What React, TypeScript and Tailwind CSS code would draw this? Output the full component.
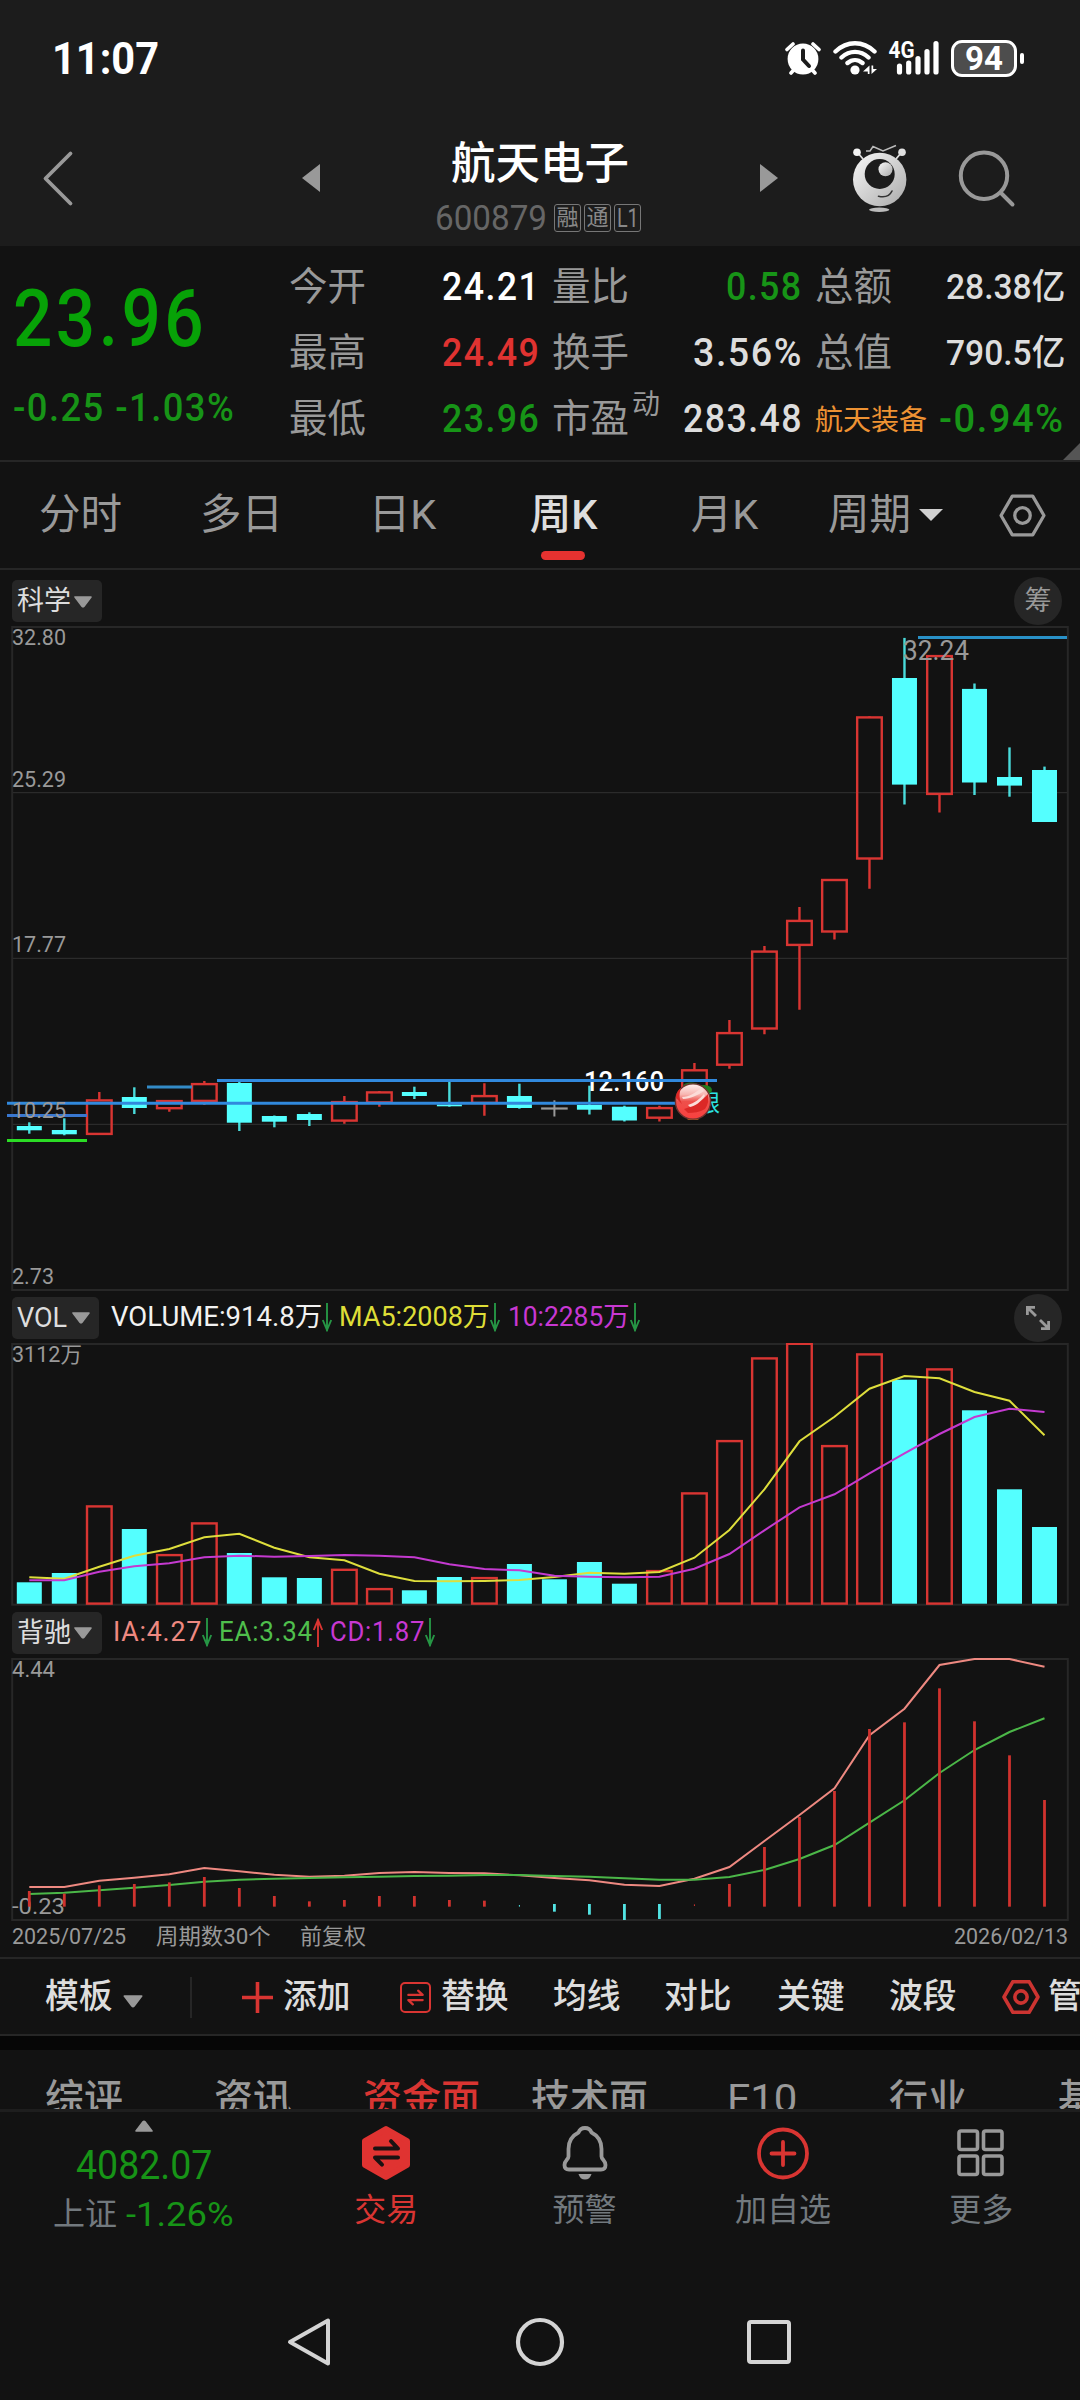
import { useLayoutEffect, useRef, type ReactNode } from "react";

/* Squeezes or stretches a line of text to the width of its box. */
function Fit({ className, children }: { className: string; children: ReactNode }) {
  const box = useRef<HTMLSpanElement>(null);
  const text = useRef<HTMLSpanElement>(null);
  useLayoutEffect(() => {
    if (box.current && text.current) {
      const k = box.current.clientWidth / text.current.offsetWidth;
      text.current.style.transform = `scaleX(${k})`;
    }
  });
  return (
    <span ref={box} className={"block shrink-0 leading-none " + className}>
      <span ref={text} className="inline-block origin-left whitespace-pre">
        {children}
      </span>
    </span>
  );
}

const CYAN = "#54ffff";
const RED = "#d93532";

type Candle = { k: "u" | "d" | "x"; t: number; b: number; h: number; l: number };
const c = (k: Candle["k"], t: number, b: number, h: number, l: number): Candle => ({ k, t, b, h, l });

const candles: Candle[] = [
  c("d", 1126, 1130.3, 1122.3, 1133.7),
  c("d", 1130, 1134.3, 1118.3, 1135.3),
  c("u", 1099.3, 1135, 1092, 1135),
  c("d", 1097, 1108, 1087.3, 1114),
  c("u", 1100, 1109.3, 1100, 1111.7),
  c("u", 1083, 1102, 1081, 1105),
  c("d", 1083, 1122.7, 1082, 1131),
  c("d", 1116, 1121.7, 1115.5, 1127.3),
  c("d", 1114, 1120, 1112.3, 1126),
  c("u", 1101, 1121.7, 1096, 1123.7),
  c("u", 1091.3, 1103.5, 1091, 1106.7),
  c("d", 1092, 1096, 1086.7, 1099),
  c("d", 1104.5, 1106.3, 1081.3, 1106.7),
  c("u", 1095, 1104, 1083.3, 1115.7),
  c("d", 1096, 1108, 1083.7, 1108.7),
  c("x", 1107.4, 1109.6, 1100.3, 1116.5),
  c("d", 1105, 1109.7, 1085.7, 1114.5),
  c("d", 1106.7, 1120.5, 1105.7, 1121.5),
  c("u", 1107, 1118.8, 1105.7, 1121.6),
  c("u", 1069.2, 1104, 1063, 1104),
  c("u", 1032, 1065.8, 1020, 1068.8),
  c("u", 950.5, 1029.6, 946, 1034.3),
  c("u", 919.8, 946, 907, 1009.7),
  c("u", 878.9, 932.6, 878.9, 939.4),
  c("u", 716.3, 859.6, 716.3, 888.7),
  c("d", 678, 784.6, 637.9, 804.5),
  c("u", 655, 795, 655, 812.6),
  c("d", 688.9, 782.5, 683.5, 795),
  c("d", 777, 785.6, 747.4, 796.7),
  c("d", 770, 822, 766.6, 822),
];

const volumeTops = [
  1582.3, 1573, 1505.3, 1529, 1554, 1522.3, 1553, 1577.3, 1578, 1568.7, 1588, 1590.3, 1577, 1577, 1564, 1579.3, 1562,
  1583.7, 1570, 1492.3, 1440, 1357.3, 1342.7, 1445, 1353.3, 1379.7, 1368.3, 1410.3, 1489.3, 1527,
];

const ma5 = [
  862, 866, 830, 797, 777, 742, 731, 773, 802, 811, 851, 873, 874, 873, 870, 861, 848, 851, 846, 803, 720, 598, 454, 380,
  296, 258, 265, 306, 332, 436,
];
const ma10 = [
  871, 871, 845, 829, 820, 802, 797, 800, 798, 795, 797, 802, 823, 837, 841, 857, 860, 862, 860, 836, 792, 721, 652, 613,
  550, 490, 432, 381, 356, 366,
];
const ia = [
  831, 831, 812, 803, 793, 774, 784, 794, 800, 797, 789, 786, 789, 790, 796, 804, 811, 824, 828, 806, 771, 693, 615, 535,
  376, 296, 165, 147, 147, 170,
];
const ea = [
  852, 848, 841, 833, 825, 815, 809, 806, 804, 802, 800, 798, 797, 795, 795, 798, 800, 805, 809, 809, 801, 780, 747, 705,
  638, 571, 489, 420, 366, 325,
];
const cd: [number, number][] = [
  [843, 890], [851, 890], [826, 890], [822, 890], [817, 890], [801, 890], [834, 890], [858, 890], [874, 890], [870, 890],
  [858, 890], [858, 890], [870, 890], [872, 890], [885, 890], [882, 905], [882, 914], [882, 930], [882, 927], [883, 888],
  [822, 890], [711, 890], [621, 890], [543, 890], [357, 890], [337, 890], [235, 890], [334, 890], [436, 890], [570, 890],
];

const cx = (i: number) => 29.3 + 35.007 * i;
const line = (v: number[], base: number) => v.map((y, i) => `${cx(i).toFixed(1)},${(base + y / 3).toFixed(1)}`).join(" ");

function Label({ x, y, w, size = 22, fill = "#999999", weight = 400, children }: {
  x: number; y: number; w: number; size?: number; fill?: string; weight?: number; children: string;
}) {
  return (
    <text x={x} y={y + size * 0.355} fontSize={size} fontWeight={weight} fill={fill} textLength={w} lengthAdjust="spacingAndGlyphs">
      {children}
    </text>
  );
}

function Frame({ top, bottom }: { top: number; bottom: number }) {
  return <rect x={12.2} y={top} width={1055.6} height={bottom - top} fill="none" stroke="#272727" strokeWidth={2} />;
}

function MainChart() {
  return (
    <svg className="block h-[665px] w-[1080px]" viewBox="0 626 1080 665">
      <Frame top={627} bottom={1290} />
      {[792.6, 958.4, 1124.3].map((y) => (
        <line key={y} x1={13} x2={1067} y1={y} y2={y} stroke="#2b2b2b" strokeWidth={1.3} />
      ))}
      {candles.map((k, i) => {
        const x = cx(i);
        if (k.k === "x")
          return (
            <g key={i} fill="#999999">
              <rect x={x - 13.3} y={k.t} width={26.6} height={2.2} />
              <rect x={x - 1} y={k.h} width={2} height={k.l - k.h} />
            </g>
          );
        if (k.k === "d")
          return (
            <g key={i} fill={CYAN}>
              <rect x={x - 1.2} y={k.h} width={2.4} height={k.l - k.h} opacity={0.85} />
              <rect x={x - 12.5} y={k.t} width={25} height={k.b - k.t} />
            </g>
          );
        return (
          <g key={i} stroke={RED} strokeWidth={2.4} fill="none">
            <path d={`M${x} ${k.h}V${k.t + 1}M${x} ${k.b - 1}V${k.l}`} />
            <rect x={x - 12.3} y={k.t + 1.1} width={24.6} height={k.b - k.t - 2.2} />
          </g>
        );
      })}
      <Label x={584} y={1081} w={80} size={27} weight={500} fill="#ffffff">12.160</Label>
      <g strokeWidth={3} fill="none">
        <path d="M7 1103.3H676M217 1080.4H717" stroke="#3189dd" />
        <path d="M7 1115.4H87" stroke="#3977cf" />
        <path d="M147 1087H192" stroke="#338bc7" />
        <path d="M918 637.5H1067" stroke="#2991c7" />
        <path d="M7 1140.4H87" stroke="#2bdc25" />
      </g>
      <text x={697} y={1111} fontSize={23} fill="#2ce4e4">银</text>
      <ellipse cx={704} cy={1090} rx={8} ry={5} fill="#1f7d1d" />
      <ellipse cx={691} cy={1085.5} rx={8} ry={3} fill="#2b6e22" />
      <rect x={687} y={1115} width={12} height={5} rx={2} fill="#c6661e" />
      <defs>
        <linearGradient id="ball" x1="0" y1="0" x2="0" y2="1">
          <stop offset="0" stopColor="#fff4f2" />
          <stop offset="0.3" stopColor="#f7b5b0" />
          <stop offset="0.5" stopColor="#ee504b" />
          <stop offset="1" stopColor="#f93f3e" />
        </linearGradient>
      </defs>
      <circle cx={693} cy={1101.5} r={17.6} fill="url(#ball)" stroke="#703230" strokeWidth={1.4} />
      <path d="M676 1098C676 1093 678 1090 681 1088C679 1094 679 1099 682 1104ZM684 1109C694 1106 702 1101 708 1094C709 1100 708 1105 705 1109C700 1112 693 1113 688 1113Z" fill="#dc2826" />
      <path d="M682 1097C689 1097 697 1092 701 1088L704 1091C698 1095 690 1099 683 1099ZM688 1105C694 1103 700 1099 704 1094L705 1096C701 1102 695 1106 690 1107Z" fill="#fbdcd8" />
      <Label x={12} y={637} w={54}>32.80</Label>
      <Label x={12} y={779} w={54}>25.29</Label>
      <Label x={12} y={944.5} w={54}>17.77</Label>
      <Label x={12} y={1110.5} w={54}>10.25</Label>
      <Label x={12} y={1276} w={42}>2.73</Label>
      <Label x={903} y={650.5} w={66} size={27}>32.24</Label>
    </svg>
  );
}

function VolumeChart() {
  return (
    <svg className="block h-[263px] w-[1080px]" viewBox="0 1343 1080 263">
      <Frame top={1344} bottom={1604.7} />
      {volumeTops.map((t, i) =>
        candles[i].k === "u" ? (
          <rect key={i} x={cx(i) - 12.3} y={t + 1.1} width={24.6} height={1603.6 - t - 1.1} fill="none" stroke={RED} strokeWidth={2.4} />
        ) : (
          <rect key={i} x={cx(i) - 12.5} y={t} width={25} height={1603.7 - t} fill={CYAN} />
        ),
      )}
      <polyline points={line(ma5, 1290)} fill="none" stroke="#dede3c" strokeWidth={2} />
      <polyline points={line(ma10, 1290)} fill="none" stroke="#c43ad0" strokeWidth={2} />
      <Label x={12} y={1354} w={70}>3112万</Label>
    </svg>
  );
}

function DivergenceChart() {
  return (
    <svg className="block h-[263px] w-[1080px]" viewBox="0 1658 1080 263">
      <Frame top={1659} bottom={1920} />
      <Label x={12} y={1669} w={43}>4.44</Label>
      <Label x={12} y={1906.5} w={53}>-0.23</Label>
      <polyline points={line(ia, 1610)} fill="none" stroke="#ee8981" strokeWidth={2} />
      <polyline points={line(ea, 1610)} fill="none" stroke="#4bb748" strokeWidth={2} />
      {cd.map(([t, b], i) => {
        const neg = i >= 14 && i <= 18;
        const w = i === 14 || i === 19 ? 1 : 2.8;
        return <rect key={i} x={cx(i) - w / 2} y={1610 + t / 3} width={w} height={(b - t) / 3} fill={neg ? "#52e4e4" : "#cf322e"} />;
      })}
    </svg>
  );
}

function Caret({ className }: { className: string }) {
  return (
    <svg className={"shrink-0 " + className} viewBox="0 0 20 12">
      <path d="M2 1H18L11 10.2Q10 11.4 9 10.2Z" fill="currentColor" stroke="currentColor" strokeWidth={1.6} strokeLinejoin="round" />
    </svg>
  );
}

function Arrow({ up }: { up?: boolean }) {
  return (
    <svg className="h-[29px] w-[10px] shrink-0" viewBox="0 0 10 29" fill="none" stroke={up ? "#d93532" : "#269645"} strokeWidth={1.9}>
      {up ? <path d="M5 29V1M.8 12L5 2L9.2 12" /> : <path d="M5 0V28M.8 17L5 27L9.2 17" />}
    </svg>
  );
}

function Hexagon({ className, sw }: { className: string; sw: number }) {
  return (
    <svg className={"shrink-0 " + className} viewBox="0 0 46 42" fill="none" stroke="currentColor" strokeWidth={sw} strokeLinejoin="round">
      <path d="M13 2H33L44 21L33 40H13L2 21Z" />
      <circle cx={23} cy={21} r={7.6} />
    </svg>
  );
}

function Swap({ className }: { className: string }) {
  return (
    <svg className={className} viewBox="0 0 26 26" fill="none" stroke="currentColor" strokeWidth={3.4} strokeLinecap="round" strokeLinejoin="round">
      <path d="M2 9H24L17 2.5M24 17H2L9 23.5" />
    </svg>
  );
}

function StatusBar() {
  return (
    <div className="flex h-[116px] items-center pl-[52px] text-white">
      <Fit className="w-[107px] text-[45px] font-bold">11:07</Fit>
      <svg className="ml-[626px] h-[34px] w-[36px]" viewBox="785 40.5 36 34">
        <circle cx={803} cy={58.5} r={15.4} fill="#fff" />
        <path d="M787 49L793 43.5M819 49L813 43.5M791 72.5L795 68M815 72.5L811 68" stroke="#fff" strokeWidth={3.6} strokeLinecap="round" />
        <path d="M803 50V59L809 65.5" fill="none" stroke="#1c1c1c" strokeWidth={4} strokeLinecap="round" />
      </svg>
      <svg className="ml-[12px] h-[34px] w-[44px]" viewBox="833 40 44 34">
        <g fill="none" stroke="#fff" strokeWidth={4.4} strokeLinecap="round">
          <path d="M835.5 50.5C847 39.5 863 39.5 874.5 50.5M841.5 56.5C849.5 49 860.5 49 868.5 56.5M847.5 62C852 58.2 858 58.2 862.5 62" />
        </g>
        <circle cx={855} cy={69} r={4.6} fill="#fff" />
        <path d="M869.500 64.500V73H867.800V70.500H863ZM871.500 73V64.500H873.200V68H877Z" fill="#fff" />
      </svg>
      <svg className="ml-[11px] h-[34px] w-[51px] overflow-visible" viewBox="888 40 51 34">
        <text x={888.5} y={56.5} fontSize={23} fontWeight={700} fill="#fff" textLength={26} lengthAdjust="spacingAndGlyphs">4G</text>
        <path d="M899.5 65V71M908.7 62V71M918 57.5V71M927 50.5V71M936 42.5V71" stroke="#fff" strokeWidth={5.2} strokeLinecap="round" />
      </svg>
      <div className="ml-[12px] flex h-[37px] w-[66px] items-center justify-center rounded-[11px] border-[3px] border-white bg-[#4d4d4d]">
        <Fit className="w-[38px] text-[33px] font-bold">94</Fit>
      </div>
      <div className="ml-[3px] h-[11px] w-[4px] rounded-full bg-white" />
    </div>
  );
}

function TitleBar() {
  return (
    <div className="flex h-[130px] pt-[24px] text-[#999999]">
      <svg className="ml-[42px] mt-[9px] h-[60px] w-[32px]" viewBox="0 0 32 60" fill="none" stroke="#999" strokeWidth={3.8} strokeLinecap="round" strokeLinejoin="round">
        <path d="M28.5 4.5L3.5 29.5L28.5 54.5" />
      </svg>
      <svg className="ml-[228px] mt-[24px] h-[28px] w-[18px]" viewBox="0 0 18 28"><path d="M18 0V28L0 14Z" fill="#999" /></svg>
      <div className="ml-[114px] flex w-[208px] flex-col items-center">
        <div className="ml-[4px] h-[46px] whitespace-nowrap text-[44.5px] font-medium leading-[48px] text-white">航天电子</div>
        <div className="mt-[16px] flex h-[32px] items-center gap-[3px]">
          <Fit className="mr-[4px] w-[112px] text-[35px] text-[#666666]">600879</Fit>
          <div className="flex h-[28px] w-[27px] items-center justify-center rounded-[3px] border border-[#777777] text-[22px] leading-none text-[#888888]">融</div>
          <div className="flex h-[28px] w-[27px] items-center justify-center rounded-[3px] border border-[#777777] text-[22px] leading-none text-[#888888]">通</div>
          <div className="flex h-[28px] w-[27px] items-center justify-center rounded-[3px] border border-[#777777] text-[#888888]">
            <Fit className="w-[22px] text-[26px]">L1</Fit>
          </div>
        </div>
      </div>
      <svg className="ml-[118px] mt-[24px] h-[28px] w-[18px]" viewBox="0 0 18 28"><path d="M0 0V28L18 14Z" fill="#999" /></svg>
      <svg className="ml-[72px] mt-[3px] h-[70px] w-[60px]" viewBox="850 143 60 70">
        <defs>
          <linearGradient id="bot" x1="0" y1="0" x2="1" y2="1">
            <stop offset="0" stopColor="#f8f8f8" />
            <stop offset="1" stopColor="#aaaaaa" />
          </linearGradient>
        </defs>
        <path d="M866 151H870L873 146.5L883 151L896 145.5" fill="none" stroke="#bbb" strokeWidth={1.5} />
        <path d="M858 153L863 159M901 153L896 159" stroke="#ddd" strokeWidth={1.8} />
        <circle cx={857} cy={152.3} r={3.8} fill="#f4f4f4" />
        <circle cx={902} cy={152.3} r={3.8} fill="#e0e0e0" />
        <circle cx={879.7} cy={179.5} r={26.7} fill="url(#bot)" />
        <circle cx={879.7} cy={174} r={15} fill="#1c1c1c" />
        <circle cx={885.5} cy={169.3} r={7} fill="url(#bot)" />
        <path d="M878.5 196.2Q888.5 198.5 892 191" fill="none" stroke="#333" strokeWidth={1.6} strokeLinecap="round" />
        <ellipse cx={879.2} cy={209.8} rx={10.2} ry={2.2} fill="#bbb" />
      </svg>
      <svg className="ml-[48px] mt-[8px] h-[60px] w-[60px]" viewBox="958 148 60 60" fill="none" stroke="#999" strokeWidth={4} strokeLinecap="round">
        <circle cx={984} cy={175.7} r={23.2} />
        <path d="M1001.5 193.5L1012.5 204.5" />
      </svg>
    </div>
  );
}

const label = "whitespace-nowrap text-[38.5px] leading-none text-[#999999]";
const quoteRow = "flex h-[66px] items-center justify-between";
const value = "text-[39px] font-medium tracking-[0.04em]";

function Quote() {
  return (
    <div className="relative flex h-[216px] border-b-2 border-[#262626] pt-[8px]">
      <div className="w-[289px] shrink-0 pl-[13px] text-[#07a207]">
        <Fit className="mt-[25px] w-[194px] text-[80px] font-medium tracking-[0.05em]">23.96</Fit>
        <Fit className="mt-[30px] w-[222px] text-[38px] tracking-[0.04em] text-[#179417] font-medium">-0.25 -1.03%</Fit>
      </div>
      <div className="w-[251px] shrink-0">
        <div className={quoteRow}><span className={label}>今开</span><Fit className={value + " w-[98px] text-white"}>24.21</Fit></div>
        <div className={quoteRow}><span className={label}>最高</span><Fit className={value + " w-[98px] text-[#e03331]"}>24.49</Fit></div>
        <div className={quoteRow}><span className={label}>最低</span><Fit className={value + " w-[98px] text-[#179417]"}>23.96</Fit></div>
      </div>
      <div className="ml-[12px] w-[251px] shrink-0">
        <div className={quoteRow}><span className={label}>量比</span><Fit className={value + " w-[77px] text-[#179417]"}>0.58</Fit></div>
        <div className={quoteRow}><span className={label}>换手</span><Fit className={value + " w-[110px] text-[#dddddd]"}>3.56%</Fit></div>
        <div className={quoteRow}>
          <span className={label}>市盈</span>
          <span className="mb-[29px] ml-[3px] mr-auto text-[28px] leading-none text-[#999999]">动</span>
          <Fit className={value + " w-[120px] text-[#dddddd]"}>283.48</Fit>
        </div>
      </div>
      <div className="ml-[12px] w-[250px] shrink-0">
        <div className={quoteRow}><span className={label}>总额</span><Fit className="w-[119px] text-[35px] font-medium text-[#dddddd]">28.38亿</Fit></div>
        <div className={quoteRow}><span className={label}>总值</span><Fit className="w-[119px] text-[35px] font-medium text-[#dddddd]">790.5亿</Fit></div>
        <div className={quoteRow}>
          <span className="mt-[3px] whitespace-nowrap text-[28px] leading-none text-[#ee9233]">航天装备</span>
          <Fit className={value + " w-[126px] text-[#179417]"}>-0.94%</Fit>
        </div>
      </div>
      <svg className="absolute bottom-0 right-0 h-[17px] w-[17px]" viewBox="0 0 17 17"><path d="M17 0V17H0Z" fill="#555" /></svg>
    </div>
  );
}

function PeriodTabs() {
  const tab = "relative flex w-[161px] shrink-0 items-center justify-center whitespace-nowrap";
  return (
    <div className="flex h-[108px] border-b-2 border-[#262626] text-[41.5px] leading-none text-[#999999]">
      <div className={tab}>分时</div>
      <div className={tab}>多日</div>
      <div className={tab}>日K</div>
      <div className={tab + " font-medium text-[#dddddd]"}>
        周K
        <span className="absolute bottom-[8px] left-[58px] h-[9px] w-[44px] rounded-full bg-[#e63230]" />
      </div>
      <div className={tab}>月K</div>
      <div className={tab}>
        周期
        <svg className="ml-[8px] h-[12px] w-[24px]" viewBox="0 0 24 12"><path d="M0 0H24L12 12Z" fill="#d0d0d0" /></svg>
      </div>
      <div className="flex w-[113px] items-center justify-center">
        <Hexagon className="h-[43px] w-[47px]" sw={3.2} />
      </div>
    </div>
  );
}

const pill = "ml-[12px] flex h-[42px] shrink-0 items-center rounded-[5px] bg-[#262626] pl-[5px] pt-[1px] text-[27px] leading-none text-[#dddddd]";
const round = "ml-auto mr-[18px] flex h-[48px] w-[48px] shrink-0 items-center justify-center rounded-full bg-[#262626] text-[27px] leading-none text-[#999999]";

function Charts() {
  return (
    <>
      <div className="flex h-[56px] items-center pt-[6px]">
        <div className={pill + " w-[90px]"}>科学<Caret className="ml-[2px] h-[12px] w-[20px] text-[#999999]" /></div>
        <div className={round}>筹</div>
      </div>
      <MainChart />
      <div className="flex h-[52px] items-center pt-[1px]">
        <div className={pill + " w-[87px]"}>
          <Fit className="w-[50px] text-[27px]">VOL</Fit>
          <Caret className="ml-[4px] h-[12px] w-[20px] text-[#999999]" />
        </div>
        <Fit className="ml-[12px] w-[211px] text-[27px] text-[#f2f2f2]">VOLUME:914.8万</Fit>
        <Arrow />
        <Fit className="ml-[7px] w-[151px] text-[27px] text-[#dede37]">MA5:2008万</Fit>
        <Arrow />
        <Fit className="ml-[8px] w-[122px] text-[27px] text-[#c838d2]">10:2285万</Fit>
        <Arrow />
        <div className={round}>
          <svg className="h-[26px] w-[26px]" viewBox="0 0 26 26" fill="none" stroke="#999" strokeWidth={2.8}>
            <path d="M10 2.4H2.4V10M2.4 2.4L11 11M16 23.6H23.6V16M23.6 23.6L15 15" />
          </svg>
        </div>
      </div>
      <VolumeChart />
      <div className="flex h-[52px] items-center pt-[1px]">
        <div className={pill + " w-[90px]"}>背驰<Caret className="ml-[2px] h-[12px] w-[20px] text-[#999999]" /></div>
        <Fit className="ml-[11px] w-[89px] text-[27px] tracking-[0.03em] text-[#ee8981]">IA:4.27</Fit>
        <Arrow />
        <Fit className="ml-[7px] w-[94px] text-[27px] tracking-[0.03em] text-[#4fbf4c]">EA:3.34</Fit>
        <Arrow up />
        <Fit className="ml-[7px] w-[95px] text-[27px] tracking-[0.03em] text-[#c838d2]">CD:1.87</Fit>
        <Arrow />
      </div>
      <DivergenceChart />
      <div className="flex h-[36px] items-center pb-[5px] pl-[12px] pr-[12px] text-[22px] leading-none text-[#999999]">
        <Fit className="w-[114px]">2025/07/25</Fit>
        <Fit className="ml-[30px] w-[115px]">周期数30个</Fit>
        <span className="ml-[29px]">前复权</span>
        <Fit className="ml-auto w-[114px]">2026/02/13</Fit>
      </div>
    </>
  );
}

function Toolbar() {
  return (
    <div className="flex h-[79px] items-center overflow-hidden whitespace-nowrap border-y-2 border-[#262626] pl-[45px] pt-[1px] text-[33.8px] font-medium leading-none text-[#dddddd]">
      <span className="w-[69px] shrink-0">模板</span>
      <Caret className="ml-[8px] mt-[9px] h-[13px] w-[22px] text-[#999999]" />
      <div className="ml-[46px] h-[41px] w-[2px] shrink-0 bg-[#262626]" />
      <svg className="ml-[50px] h-[31px] w-[31px] shrink-0" viewBox="0 0 31 31"><path d="M15.5 0V31M0 15.5H31" stroke={RED} strokeWidth={3.6} /></svg>
      <span className="ml-[10px] w-[68px] shrink-0">添加</span>
      <div className="ml-[49px] flex h-[31px] w-[31px] shrink-0 items-center justify-center rounded-[5px] border-[2.5px] border-[#d93532] text-[#d93532]">
        <Swap className="h-[17px] w-[19px]" />
      </div>
      <span className="ml-[10px] w-[68px] shrink-0">替换</span>
      <span className="ml-[44px] w-[68px] shrink-0">均线</span>
      <span className="ml-[43px] w-[68px] shrink-0">对比</span>
      <span className="ml-[45px] w-[68px] shrink-0">关键</span>
      <span className="ml-[44px] w-[68px] shrink-0">波段</span>
      <Hexagon className="ml-[45px] h-[34px] w-[38px] text-[#cc3431]" sw={4.4} />
      <span className="ml-[8px] shrink-0">管理</span>
    </div>
  );
}

function InfoTabs() {
  return (
    <div className="flex h-[59px] items-start overflow-hidden whitespace-nowrap pt-[30px] text-[39px] font-medium leading-none text-[#999999]">
      <span className="ml-[45px] w-[169px] shrink-0">综评</span>
      <span className="w-[149px] shrink-0">资讯</span>
      <span className="w-[168px] shrink-0 text-[#d93532]">资金面</span>
      <span className="w-[196px] shrink-0">技术面</span>
      <Fit className="w-[70px] font-normal">F10</Fit>
      <span className="ml-[92px] w-[169px] shrink-0">行业</span>
      <span className="shrink-0">基本面</span>
    </div>
  );
}

function BottomBar() {
  const item = "flex w-[198.4px] shrink-0 flex-col items-center pt-[12px] text-[32px] leading-none text-[#72797e]";
  return (
    <div className="flex h-[156px] border-t-[3px] border-[#1e1e1e]">
      <div className="flex w-[287px] shrink-0 flex-col items-center pt-[8px]">
        <Caret className="h-[12px] w-[20px] rotate-180 text-[#999999]" />
        <Fit className="mt-[14px] w-[136px] text-[40px] text-[#179417]">4082.07</Fit>
        <div className="mt-[11px] flex items-center text-[32px] leading-none text-[#72797e]">
          上证
          <Fit className="ml-[9px] w-[108px] text-[34px] text-[#179417]">-1.26%</Fit>
        </div>
      </div>
      <div className={item}>
        <svg className="h-[58px] w-[52px]" viewBox="0 0 52 58">
          <path d="M26 5L47 17V41L26 53L5 41V17Z" fill="#e03331" stroke="#e03331" strokeWidth={6} strokeLinejoin="round" />
          <path d="M15 24.6H38L31 17.2M38 33.6H15L22 40.6" fill="none" stroke="#1a1212" strokeWidth={4} strokeLinecap="round" strokeLinejoin="round" />
        </svg>
        <span className="mt-[12px] text-[#d93532]">交易</span>
      </div>
      <div className={item}>
        <svg className="h-[58px] w-[52px]" viewBox="0 0 52 58">
          <path d="M19.5 8.5C21 4.5 24 4 26 4S31 4.500 32.500 8.500C39.500 12 42.500 18 42.500 25V32.500C42.500 35.500 46.500 36.500 46.500 41C46.500 44.500 44.500 45.500 42 45.500H10C7.500 45.500 5.500 44.500 5.500 41C5.500 36.500 9.500 35.500 9.500 32.500V25C9.500 18 12.500 12 19.500 8.500Z" fill="none" stroke="#999" strokeWidth={3.8} strokeLinejoin="round" />
          <path d="M19.500 50H32.500Q31 55.500 26 55.500Q21 55.500 19.500 50Z" fill="#999" />
        </svg>
        <span className="mt-[12px]">预警</span>
      </div>
      <div className={item}>
        <svg className="h-[58px] w-[52px]" viewBox="0 0 52 58" fill="none" stroke="#d93532" strokeLinecap="round">
          <circle cx={26} cy={29.5} r={24} strokeWidth={3.8} />
          <path d="M26 18V41M14.500 29.500H37.500" strokeWidth={3.8} />
        </svg>
        <span className="mt-[12px]">加自选</span>
      </div>
      <div className={item}>
        <svg className="h-[58px] w-[52px]" viewBox="0 0 52 58" fill="none" stroke="#999" strokeWidth={3.6}>
          <rect x={4} y={7} width={18.500} height={18.500} rx={2} />
          <rect x={28.500} y={7} width={18.500} height={18.500} rx={2} />
          <rect x={4} y={32} width={18.500} height={18.500} rx={2} />
          <rect x={28.500} y={32} width={18.500} height={18.500} rx={2} />
        </svg>
        <span className="mt-[12px]">更多</span>
      </div>
    </div>
  );
}

function SystemNav() {
  return (
    <div className="flex pt-[52px]">
      <svg className="ml-[286px] h-[50px] w-[46px]" viewBox="0 0 46 50" fill="none" stroke="#d4d4d4" strokeWidth={4} strokeLinejoin="round">
        <path d="M42 3.500V46.500L4 25Z" />
      </svg>
      <svg className="ml-[183px] h-[50px] w-[50px]" viewBox="0 0 50 50"><circle cx={25} cy={25} r={22} fill="none" stroke="#d4d4d4" strokeWidth={4.200} /></svg>
      <div className="ml-[182px] mt-[3px] h-[44px] w-[44px] rounded-[4px] border-4 border-[#d4d4d4]" />
    </div>
  );
}

export default function App() {
  return (
    <div className="h-[2400px] w-[1080px] overflow-hidden bg-[#121212] [font-family:Roboto,'Noto_Sans_CJK_SC',sans-serif]">
      <header className="h-[246px] bg-[#1c1c1c]">
        <StatusBar />
        <TitleBar />
      </header>
      <Quote />
      <PeriodTabs />
      <Charts />
      <Toolbar />
      <div className="h-[14px] bg-[#060606]" />
      <InfoTabs />
      <BottomBar />
      <SystemNav />
    </div>
  );
}
